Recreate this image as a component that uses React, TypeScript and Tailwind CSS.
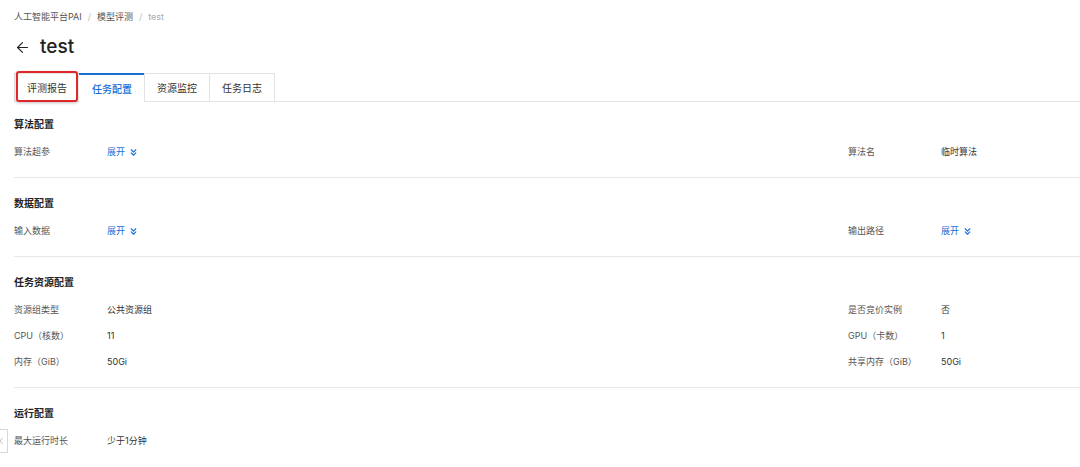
import React from 'react';
import { ArrowLeft, ChevronsDown, ChevronLeft } from 'lucide-react';

type Cell = { label: string; value?: string; expand?: boolean };
type Section = { title: string; rows: [Cell, Cell?][] };

const sections: Section[] = [
  {
    title: '算法配置',
    rows: [[{ label: '算法超参', expand: true }, { label: '算法名', value: '临时算法' }]],
  },
  {
    title: '数据配置',
    rows: [[{ label: '输入数据', expand: true }, { label: '输出路径', expand: true }]],
  },
  {
    title: '任务资源配置',
    rows: [
      [{ label: '资源组类型', value: '公共资源组' }, { label: '是否竞价实例', value: '否' }],
      [{ label: 'CPU（核数）', value: '11' }, { label: 'GPU（卡数）', value: '1' }],
      [{ label: '内存（GiB）', value: '50Gi' }, { label: '共享内存（GiB）', value: '50Gi' }],
    ],
  },
  {
    title: '运行配置',
    rows: [[{ label: '最大运行时长', value: '少于1分钟' }]],
  },
];

const tabs = ['评测报告', '任务配置', '资源监控', '任务日志'];

function Value({ cell }: { cell?: Cell }) {
  if (!cell) return <div />;
  if (cell.expand) {
    return (
      <div className="flex items-center gap-[3px] text-[#1a6fd6] cursor-pointer">
        <span>展开</span>
        <ChevronsDown size={11} strokeWidth={2.5} />
      </div>
    );
  }
  return <div className="text-[#333]">{cell.value}</div>;
}

export default function App() {
  return (
    <div
      className="relative w-[1080px] h-[467px] overflow-hidden bg-white pl-[14px]"
      style={{ fontFamily: 'Inter, "Noto Sans CJK SC", sans-serif' }}
    >
      {/* breadcrumb */}
      <div className="pt-[10px] h-[24px] flex items-center gap-[6px] text-[9px] leading-[14px] text-[#555]">
        <span>人工智能平台PAI</span>
        <span className="text-[#bbb]">/</span>
        <span>模型评测</span>
        <span className="text-[#bbb]">/</span>
        <span className="text-[#aaa]">test</span>
      </div>

      {/* title */}
      <div className="mt-[9px] h-[28px] flex items-center gap-[9px] text-[#222]">
        <ArrowLeft size={17} strokeWidth={1.6} />
        <span className="text-[19px] font-medium">test</span>
      </div>

      {/* tabs */}
      <div className="mt-[12px] flex border-b border-[#e3e3e3] h-[29px]">
        {tabs.map((t, i) => {
          const active = i === 1;
          return (
            <div
              key={t}
              className={
                active
                  ? 'relative -mb-px -ml-px h-[30px] w-[66px] flex items-center justify-center text-[10px] font-medium text-[#1a6fd6] bg-white border-t-2 border-[#1a6fd6]'
                  : 'relative h-[29px] w-[66px] flex items-center justify-center text-[10px] text-[#333] border border-[#e3e3e3] border-b-0 -ml-px first:ml-0'
              }
            >
              {t}
              {i === 0 && (
                <div className="absolute left-[1px] top-[-3px] w-[62px] h-[31px] rounded-[3px] border-2 border-[#e0282a] shadow-[0_1px_3px_rgba(0,0,0,0.25)]" />
              )}
            </div>
          );
        })}
      </div>

      {/* sections */}
      <div className="mt-[-3px] text-[9px]">
        {sections.map((s, si) => (
          <div
            key={s.title}
            className={
              si < sections.length - 1
                ? 'pt-[10px] pb-[12px] border-b border-[#e8e8e8]'
                : 'pt-[10px]'
            }
          >
            <div className="h-[30px] flex items-center text-[10px] font-bold text-[#222]">{s.title}</div>
            {s.rows.map((r, ri) => (
              <div key={ri} className="h-[26px] grid grid-cols-[93px_741px_93px_1fr] items-center">
                <div className="text-[#555]">{r[0].label}</div>
                <Value cell={r[0]} />
                <div className="text-[#555]">{r[1]?.label}</div>
                <Value cell={r[1]} />
              </div>
            ))}
          </div>
        ))}
      </div>

      {/* collapsed sidebar toggle */}
      <div className="absolute left-[-9px] top-[429px] w-[17px] h-[24px] border border-[#d8d8d8] bg-white flex items-center justify-end pr-[1px] text-[#888]">
        <ChevronLeft size={10} strokeWidth={1.5} />
      </div>
    </div>
  );
}
